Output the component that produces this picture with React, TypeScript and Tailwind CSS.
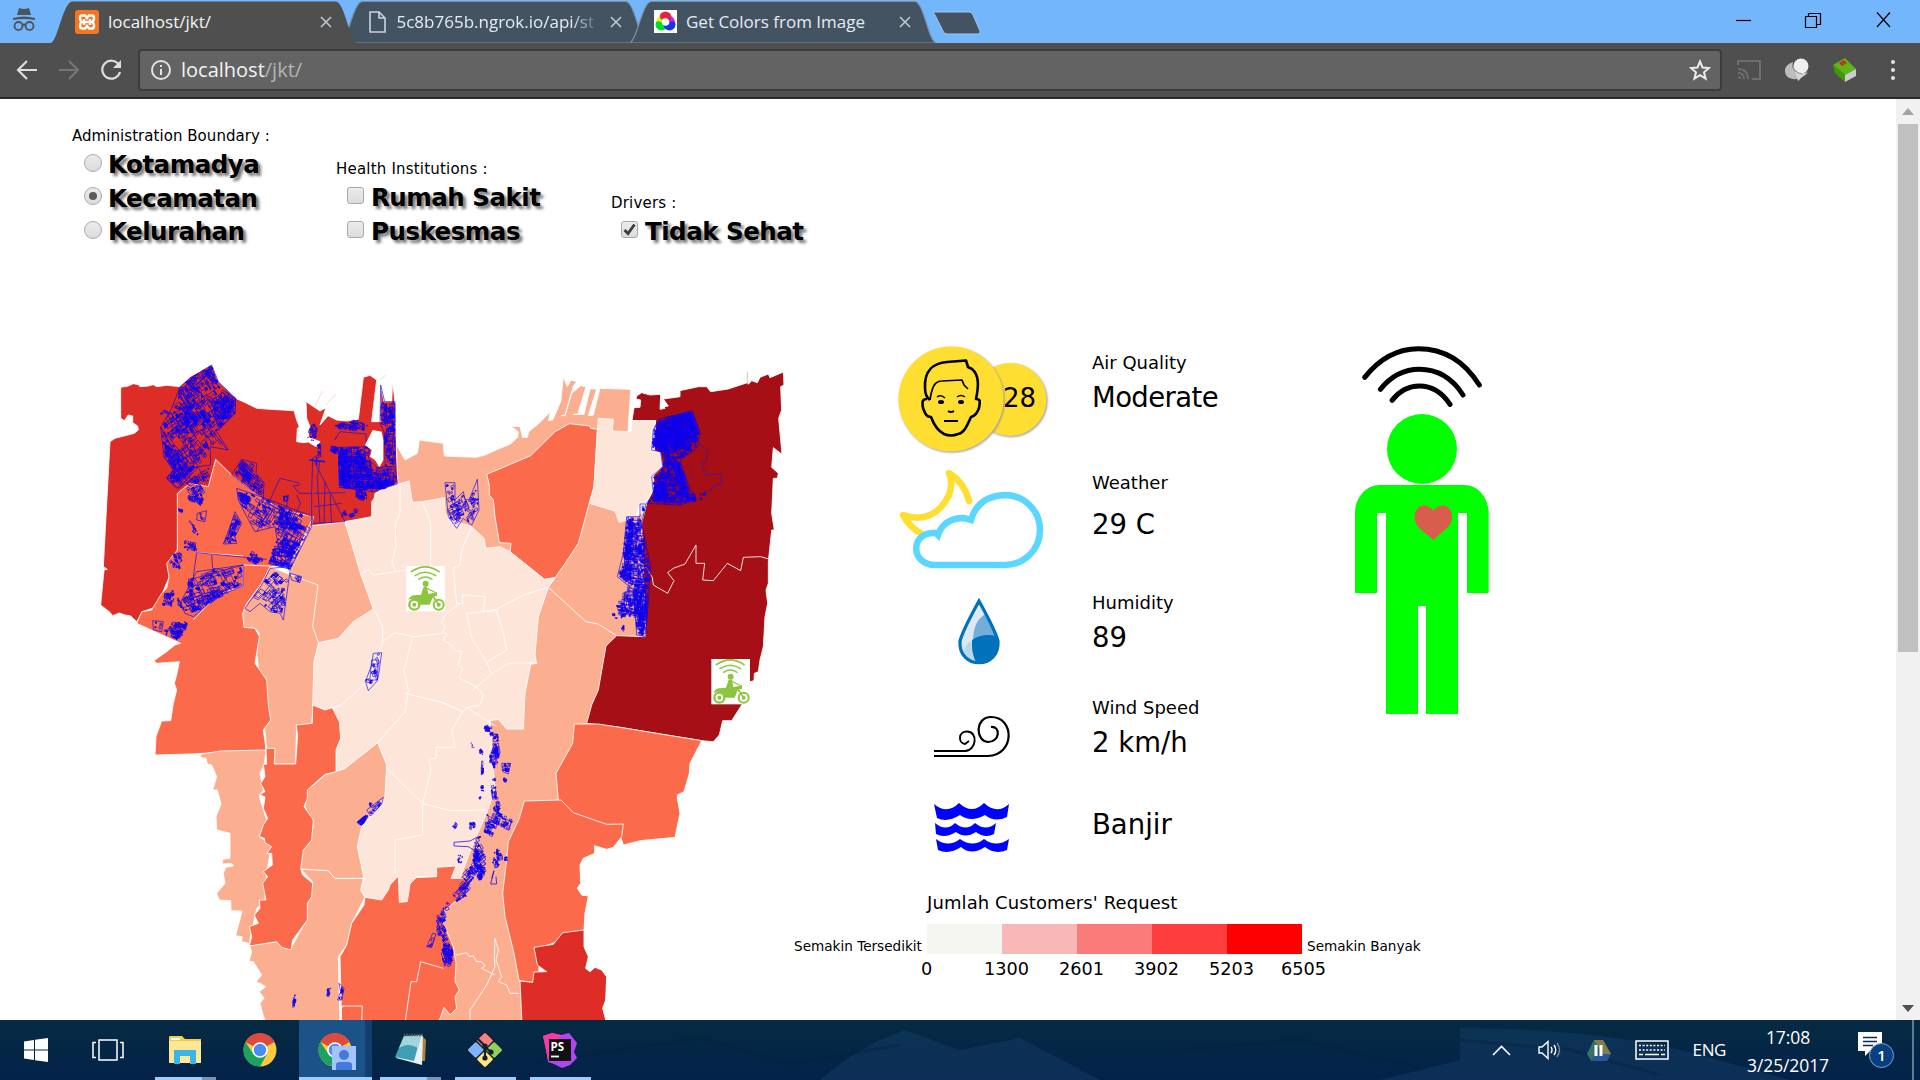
import React from "react";

type Pt = [number, number];

const parse = (s: string): Pt[] => s.split(" ").map((p) => p.split(",").map(Number) as Pt);

function inside(x: number, y: number, poly: Pt[]) {
  let r = false;
  for (let i = 0, j = poly.length - 1; i < poly.length; j = i++) {
    const [xi, yi] = poly[i];
    const [xj, yj] = poly[j];
    if (yi > y !== yj > y && x < ((xj - xi) * (y - yi)) / (yj - yi) + xi) r = !r;
  }
  return r;
}

// Building footprints scattered inside an outline, aligned to the street angle.
function footprints(poly: Pt[], n: number, deg: number, size: number, seed: number) {
  let s = seed * 7919 + 13;
  const rnd = () => {
    s = (s * 1103515245 + 12345) % 2147483648;
    return s / 2147483648;
  };
  const xs = poly.map((p) => p[0]);
  const ys = poly.map((p) => p[1]);
  const x0 = Math.min(...xs), x1 = Math.max(...xs), y0 = Math.min(...ys), y1 = Math.max(...ys);
  const a = (deg * Math.PI) / 180;
  const ca = Math.cos(a), sa = Math.sin(a);
  let line = "";
  let solid = "";
  let made = 0;
  for (let t = 0; t < n * 12 && made < n; t++) {
    const cx = x0 + rnd() * (x1 - x0);
    const cy = y0 + rnd() * (y1 - y0);
    const filled = rnd() < 0.28;
    const big = rnd() < 0.12 ? 2 : 1;
    const k = filled ? 0.45 : big;
    const w = k * size * (0.2 + rnd() * rnd() * 1.4);
    const h = k * size * (0.2 + rnd() * rnd());
    const pts = ([[-w, -h], [w * 0.9, -h], [w, h], [-w * 0.8, h * 0.9]] as Pt[]).map(
      ([u, v]) => [cx + u * ca - v * sa, cy + u * sa + v * ca] as Pt
    );
    if (!pts.every((p) => inside(p[0], p[1], poly))) continue;
    made++;
    const d = "M" + pts.map((p) => p[0].toFixed(1) + " " + p[1].toFixed(1)).join("L") + "Z";
    if (filled) solid += d;
    else line += d;
  }
  return { line, solid };
}

interface Cluster { p: string; n: number; a: number; s: number; o?: boolean }

function Flood({ items }: { items: Cluster[] }) {
  return (
    <>
      {items.map((c, i) => {
        const f = footprints(parse(c.p), c.n, c.a, c.s, i + 3);
        return (
          <g key={i} stroke="#1000ec" strokeWidth="1.9" fill="none">
            {c.o && <polygon points={c.p} />}
            <path d={f.line} />
            <path d={f.solid} fill="#0a00f0" />
          </g>
        );
      })}
    </>
  );
}

const northWest: Cluster[] = [
  { p: "365,45 385,95 437,145 435,190 380,245 415,300 360,290 362,345 325,350 290,390 260,415 230,385 250,360 222,320 245,290 212,232 245,175 270,110 300,85", n: 300, a: 55, s: 15, o: true },
  { p: "365,45 385,95 400,115 375,100 340,75 290,110 260,150 245,190 205,195 208,180 245,175 270,110 300,85", n: 90, a: -30, s: 9 },
  { p: "437,145 435,190 385,240 370,170 400,120", n: 100, a: 45, s: 11, o: true },
  { p: "212,232 290,330 300,390 265,415 230,385 250,360 222,320", n: 100, a: 55, s: 13, o: true },
  { p: "300,110 320,150 330,230 290,240 265,170", n: 60, a: 55, s: 12 },
  { p: "290,390 362,345 358,410 325,390 350,430 335,468 270,420", n: 50, a: -30, s: 12 },
  { p: "318,440 340,450 335,468 290,450 295,435", n: 28, a: 30, s: 7 },
  { p: "322,490 350,482 345,515 320,510", n: 5, a: 20, s: 7, o: true },
  { p: "265,475 285,480 275,490 265,488", n: 8, a: 20, s: 6 },
  { p: "295,510 310,515 330,560 310,555", n: 10, a: 50, s: 8 },
  { p: "280,570 322,578 320,605 282,602", n: 22, a: 25, s: 9 },
  { p: "425,375 455,328 500,340 498,370 522,398 520,445 470,410", n: 75, a: 40, s: 13, o: true },
  { p: "440,415 540,450 668,500 665,530 600,658 535,640 565,590 555,530 495,545 470,500 445,450", n: 150, a: 30, s: 15, o: true },
  { p: "440,420 480,440 490,480 445,450", n: 40, a: 30, s: 9 },
  { p: "540,470 620,500 655,540 560,545", n: 50, a: 20, s: 12 },
  { p: "555,572 635,570 602,658 535,640", n: 100, a: 8, s: 10 },
  { p: "435,485 455,520 435,560 440,580 400,582 420,530", n: 50, a: 20, s: 9, o: true },
  { p: "232,640 255,605 275,600 280,660 262,665", n: 28, a: 60, s: 9 },
  { p: "320,665 460,645 460,708 380,740 310,800 285,790 270,760", n: 80, a: -20, s: 15, o: true },
  { p: "300,800 330,745 390,705 460,690 455,712 385,745", n: 80, a: -38, s: 9 },
  { p: "215,765 222,730 255,715 250,775", n: 32, a: 10, s: 9 },
  { p: "188,812 220,815 215,845 190,840", n: 5, a: 20, s: 8, o: true },
  { p: "240,815 300,815 290,840 265,872 215,850", n: 70, a: 20, s: 9 },
  { p: "262,735 275,755 285,780 262,770", n: 16, a: 60, s: 7 },
  { p: "290,690 315,680 318,740 300,740", n: 26, a: 80, s: 8 },
  { p: "465,635 485,600 530,632 500,645", n: 30, a: 20, s: 10 },
  { p: "540,655 602,650 595,700 580,810 570,790 540,785 510,760 480,785 465,775 515,705", n: 34, a: -50, s: 18, o: true },
  { p: "600,670 635,680 630,698 605,690", n: 6, a: 20, s: 8, o: true },
  { p: "540,720 590,700 584,790 540,790", n: 38, a: 5, s: 8 },
  { p: "655,235 672,210 685,240 680,275 652,270", n: 24, a: 60, s: 8 },
  { p: "680,275 692,280 694,320 684,330", n: 14, a: 90, s: 7 },
  { p: "732,222 800,208 838,228 830,245 738,240", n: 40, a: 10, s: 11 },
  { p: "720,288 745,290 745,312 720,308", n: 16, a: 10, s: 9 },
  { p: "745,292 840,290 835,325 862,355 880,350 915,350 922,402 850,425 748,412", n: 230, a: 2, s: 14, o: true },
  { p: "744,300 772,300 770,412 748,412", n: 70, a: 90, s: 12 },
  { p: "770,320 830,320 830,360 770,360", n: 60, a: 0, s: 8 },
  { p: "850,400 922,378 922,402 890,420 750,415 750,400", n: 80, a: -6, s: 10 },
  { p: "872,105 884,155 915,155 916,350 886,350 882,245 870,220", n: 80, a: 88, s: 14, o: true },
  { p: "755,465 770,470 772,500 755,500", n: 8, a: 10, s: 6 },
  { p: "775,495 800,470 810,480 785,510", n: 12, a: -30, s: 7 },
  { p: "795,415 832,415 830,462 798,450", n: 30, a: 0, s: 9 },
  { p: "850,910 875,908 865,980 862,990 828,990 845,945", n: 6, a: 70, s: 9, o: true },
];

const northEast: Cluster[] = [
  { p: "15,398 45,398 45,450 70,425 75,450 88,448 112,388 117,480 95,525 70,505 50,535 25,500", n: 80, a: 65, s: 11, o: true },
  { p: "640,240 655,208 757,182 780,250 770,295 720,330 740,390 765,450 720,465 620,460 640,430 635,380 668,350 662,305 635,300", n: 620, a: -12, s: 10, o: true },
  { p: "640,240 655,208 757,182 780,250 720,300 680,280 690,330 662,305 635,300", n: 300, a: -12, s: 12 },
  { p: "690,330 715,330 740,390 760,452 735,455 715,400", n: 100, a: 60, s: 9 },
  { p: "640,400 690,360 680,400 690,450 640,455", n: 120, a: 20, s: 9 },
  { p: "600,462 618,462 605,520 632,650 628,710 617,860 590,855 580,720 532,680 550,610 560,500 600,500", n: 300, a: 2, s: 14, o: true },
  { p: "585,700 628,700 617,860 600,858 580,800 515,815 515,790 558,710", n: 110, a: 5, s: 13 },
  { p: "560,500 580,500 575,700 532,680 560,640 548,610", n: 110, a: 80, s: 10 },
  { p: "725,430 800,422 800,445 725,465", n: 14, a: -10, s: 13 },
  { p: "545,822 558,825 550,848 543,842", n: 8, a: 60, s: 7 },
];

const south: Cluster[] = [
  { p: "755,0 775,0 772,62 745,92 735,60 750,55", n: 9, a: 100, s: 12, o: true },
  { p: "708,488 735,465 750,468 725,498", n: 40, a: -50, s: 8 },
  { p: "740,450 790,412 785,432 752,468", n: 12, a: -50, s: 10, o: true },
  { p: "745,425 758,430 750,445", n: 8, a: 30, s: 6 },
  { p: "520,1005 530,1003 528,1045 517,1045", n: 12, a: 95, s: 8 },
  { p: "622,985 633,982 628,1018 617,1015", n: 12, a: 105, s: 8 },
  { p: "657,970 672,985 665,1020 653,1020 662,995", n: 8, a: 95, s: 9, o: true },
  { p: "1085,205 1105,187 1125,205 1138,230 1142,290 1125,330 1130,400 1147,440 1140,470 1115,450 1118,420 1105,400 1120,340 1105,300 1120,240", n: 85, a: 80, s: 13 },
  { p: "1145,310 1172,310 1165,342 1148,335", n: 14, a: 5, s: 10, o: true },
  { p: "1145,355 1162,350 1160,372 1150,365", n: 8, a: 5, s: 7 },
  { p: "1050,240 1058,255 1070,265 1055,265", n: 8, a: 50, s: 5 },
  { p: "1075,268 1092,265 1088,290 1078,285", n: 10, a: 50, s: 7 },
  { p: "1083,300 1092,300 1090,360 1083,360", n: 10, a: 90, s: 8 },
  { p: "1080,375 1093,375 1092,395 1082,392", n: 7, a: 90, s: 7 },
  { p: "1077,405 1084,405 1083,420 1077,420", n: 4, a: 90, s: 5 },
  { p: "1090,520 1100,460 1140,455 1180,480 1170,520 1140,500 1110,540", n: 48, a: 20, s: 13 },
  { p: "1050,640 1062,540 1080,520 1090,555 1100,600 1100,630 1085,670", n: 80, a: 60, s: 12 },
  { p: "1115,620 1120,570 1140,560 1150,600 1130,630", n: 24, a: 80, s: 9 },
  { p: "1152,590 1163,590 1162,608 1153,605", n: 8, a: 80, s: 6 },
  { p: "993,490 1015,482 1015,508 1000,508", n: 8, a: 50, s: 7 },
  { p: "1040,490 1068,482 1065,508 1042,512", n: 14, a: 20, s: 8 },
  { p: "1010,585 1030,580 1028,612 1010,610", n: 8, a: 30, s: 9 },
  { p: "1030,630 1065,610 1070,650 1040,710 990,742 968,740 1010,690", n: 52, a: -45, s: 12 },
  { p: "965,738 990,740 975,790 985,840 1000,870 1000,910 975,930 962,880 970,850 950,820 948,770", n: 95, a: 65, s: 12 },
  { p: "938,820 948,822 935,862 920,860", n: 5, a: 105, s: 9, o: true },
];

const RED = "#de2d26", ORG = "#fb6a4a", SAL = "#fcae91", PALE = "#fee5d9", DARK = "#a50f15";

function Rider({ x, y }: { x: number; y: number }) {
  return (
    <g transform={`translate(${x} ${y})`}>
      <rect width="116" height="136" fill="#fff" />
      <g fill="none" stroke="#8cc63f" strokeLinecap="round">
        <path d="M15 17Q57 -12 98 17" strokeWidth="5" />
        <path d="M26 29Q57 8 88 29" strokeWidth="4.5" />
        <path d="M37 40Q57 26 77 40" strokeWidth="4" />
        <circle cx="24" cy="116" r="15" strokeWidth="7" />
        <circle cx="97" cy="116" r="15" strokeWidth="6" />
        <path d="M78 88L97 116" strokeWidth="5" />
        <path d="M60 66L84 78" strokeWidth="4" />
      </g>
      <g fill="#8cc63f">
        <circle cx="58" cy="53" r="9" />
        <path d="M52 62L62 62L66 84L78 82L92 78L92 90L80 92L70 116L42 116L38 104Q24 94 6 102Q12 88 24 88L44 86Z" />
        <circle cx="24" cy="116" r="6" /><circle cx="97" cy="116" r="6" />
      </g>
    </g>
  );
}

function DistrictMap() {
  return (
    <svg className="block h-[670px] w-[700px] shrink-0" viewBox="0 0 2100 2010">
      <g stroke="#fff" strokeWidth="2.6" strokeLinejoin="round">
        {/* coastal strip and centre-east */}
        <g fill={SAL}>
          <polygon points="920,285 945,330 982,310 988,270 1060,280 1063,318 1160,322 1185,315 1230,295 1260,283 1283,262 1285,245 1262,228 1290,230 1298,263 1312,262 1316,245 1345,222 1382,185 1375,212 1388,210 1412,155 1420,80 1432,110 1443,90 1460,95 1450,108 1425,195 1414,197 1425,197 1445,130 1472,107 1488,110 1463,193 1450,193 1482,193 1500,117 1520,117 1495,197 1510,195 1530,115 1622,118 1614,245 1640,330 1640,500 1700,460 1670,870 1600,900 1560,1120 1460,1400 1400,1700 1295,2020 760,2020 900,1500 1030,1000 1000,800 1130,600 960,500 920,400" />
          <polygon points="765,515 665,527 640,565 602,640 600,800 685,880 755,870 850,777" />
          <polygon points="540,650 630,685 684,705 668,830 686,880 673,930 671,1065 665,1120 620,1130 616,1242 555,1242 530,1195 510,990 500,910 508,850 495,835 460,832 458,780 530,665" />
        </g>
        {/* west */}
        <polygon fill={RED} points="92,112 115,108 130,101 145,104 150,110 175,108 190,104 200,110 230,106 270,110 300,80 365,45 385,95 437,145 470,160 500,175 540,178 612,182 620,210 628,230 622,235 620,275 640,278 655,276 678,290 690,275 655,262 660,230 650,205 648,155 690,183 708,173 690,225 714,197 740,210 770,213 805,208 820,82 840,76 860,90 845,215 872,215 872,105 882,155 905,155 908,92 915,160 916,240 924,400 855,430 845,500 765,515 665,527 560,520 378,420 270,500 262,600 238,680 200,770 158,785 140,815 122,798 105,795 88,789 68,797 60,787 32,765 42,660 52,658 40,650 48,500 60,275 75,265 133,250 145,240 143,228 128,218 128,198 115,195 103,212 92,205" />
        <polygon fill={ORG} points="377,328 425,375 530,455 600,485 670,500 665,527 640,565 602,645 540,650 515,700 470,760 458,790 462,832 495,835 508,860 500,910 495,940 530,990 535,1065 542,1110 520,1140 530,1210 440,1205 300,1212 195,1215 198,1160 215,1113 242,1112 250,1060 260,1020 253,1000 260,975 268,935 200,940 192,932 230,905 255,885 272,880 140,820 155,785 185,780 215,730 230,715 237,680 230,640 262,600 262,430 300,400 355,410" />
        <path fill="none" d="M320 608L460 618M310 810L380 735L460 708V645L540 648M670 500L600 645" />
        {/* eastern districts */}
        <g transform="translate(1050 0)">
          <polygon fill={ORG} points="140,373 272,317 345,245 388,221 450,228 452,235 472,238 462,410 445,470 415,580 372,645 345,683 313,688 210,605 213,580 178,578 165,500 160,450 148,435 148,405" />
          <polygon fill={DARK} points="576,212 582,173 600,172 602,150 588,147 590,138 605,128 630,135 662,133 660,178 675,175 672,170 685,168 670,147 720,140 720,122 775,110 800,110 812,125 865,117 922,98 925,103 935,92 952,98 960,82 985,72 990,83 1030,66 1032,105 1022,110 1025,180 1016,205 1026,313 1000,293 995,352 1015,370 1012,385 1000,385 995,490 1003,540 995,540 985,635 985,700 978,720 983,760 975,800 970,890 960,930 955,965 943,970 942,992 930,995 905,1065 875,1112 848,1112 838,1155 820,1175 785,1172 660,1152 540,1132 440,1120 455,1065 475,1020 498,888 530,857 617,860 605,520 620,460 640,420 647,212" />
          <polygon fill={PALE} points="475,205 520,208 517,243 572,245 576,212 647,212 640,260 635,300 662,308 668,350 637,380 640,415 620,460 600,465 590,495 560,510 538,517 525,483 448,460 462,410" />
          <path fill="none" d="M617 650L637 682L640 705L683 730L702 692L683 668L700 655L735 642L768 585V640H794L788 690L820 692L862 640L902 662L910 622L962 620L987 627M325 712L438 815L475 822L530 857" />
          <path fill="none" stroke="#c4777a" strokeWidth="1.5" d="M922 65V100" />
          <polygon fill={ORG} points="403,1122 475,1122 540,1132 785,1172 750,1240 748,1270 732,1325 712,1335 720,1390 705,1462 600,1472 550,1485 535,1440 360,1450 355,1350 348,1270 370,1230 398,1180" />
        </g>
        {/* centre */}
        <path fill={PALE} d="M765 515L845 505V455L870 420L925 402L957 393L967 457L998 455L1063 443L1065 490L1100 515L1145 530L1182 565L1187 595L1230 590L1260 605L1363 688L1395 683L1375 712L1345 800L1335 915L1340 940L1322 943L1305 1030L1300 1137H1250L1225 1108L1200 1112L1215 1320L1190 1390L1150 1480L1110 1585L1083 1585L1098 1548L1040 1552V1580H978L955 1655L928 1657L925 1578L875 1650L825 1642L812 1620L822 1585L802 1490L815 1430L885 1340L890 1245L863 1178L763 1257L740 1263L738 1200L752 1165L727 1073L705 1080L668 1065L672 935L686 878L745 865L790 815L850 777L812 672Z" />
        <path fill="none" d="M930 400V490L915 520L918 590L905 640L917 662M998 457L1022 520V648M812 672L835 658L850 675L950 660M850 777L878 830V875L915 848L970 860L1060 850M968 860L942 960L955 1020L945 1085L863 1178M877 875L870 910L830 995L755 1065L727 1073M945 1030L1060 1058L1118 1085L1085 1140L1095 1192H1040L1038 1225L1018 1227L1022 1265L998 1360M863 1178L895 1260L998 1360L1080 1382L1190 1380M998 1360V1455L915 1470V1570M1050 1055L1118 1085L1130 1073L1220 1130M1145 530L1115 600L1110 645L1090 655L1100 760L1118 760V735L1185 740L1180 785M1065 795L1110 760M1180 785L1220 778L1300 735L1375 712L1395 683M1130 790L1220 782L1240 850L1250 900L1190 937L1145 865ZM1190 937L1205 972L1148 1020M1205 972L1255 940L1340 938M1065 795L1055 815L1065 830L1058 845L1070 850L1060 872L1085 885L1092 900L1115 905L1105 945L1118 955L1108 985L1140 1000L1160 1012L1180 1035L1170 1065L1130 1073" />
        {/* south */}
        <g transform="translate(90 930)">
          <polygon fill={SAL} points="242,283 300,273 438,270 433,313 420,340 430,390 418,410 440,480 418,530 455,555 440,635 435,720 410,745 388,850 365,845 367,830 347,827 366,753 333,752 332,722 298,720 290,700 315,670 310,640 318,622 340,618 335,610 307,612 308,598 330,595 330,520 290,510 288,470 303,432 292,390 278,390 290,350 275,315 262,312 258,295 242,293" />
          <polygon fill={SAL} points="388,855 440,850 470,845 510,870 560,780 562,740 578,665 542,627 625,632 645,655 730,655 722,690 735,712 695,790 680,855 655,890 660,1090 437,1090 428,1060 420,1030 432,1015 418,995 437,980 420,970 408,965 425,945 400,905 387,905 395,875" />
          <polygon fill={SAL} points="562,390 615,345 650,333 673,327 773,248 800,315 795,410 725,500 712,560 732,655 645,655 625,632 542,627 545,575 580,500 555,440" />
          <polygon fill={ORG} points="438,265 465,265 463,312 527,312 533,225 528,195 577,190 578,135 615,150 637,143 658,185 662,235 648,270 648,335 615,343 562,390 562,415 552,440 580,480 575,540 550,570 542,627 548,645 578,670 575,710 562,730 562,780 518,840 513,870 485,862 470,845 388,858 395,830 388,800 415,790 403,765 420,745 418,720 438,720 428,670 443,650 430,635 457,615 455,580 440,580 455,560 435,548 433,535 418,530 430,495 443,475 430,445 435,410 418,405 435,395 422,370 435,350 430,313 440,313" />
          <polygon fill={ORG} points="735,712 785,720 805,690 810,675 835,648 838,727 862,725 870,672 888,653 950,650 950,622 1008,618 993,655 1060,655 1035,700 975,750 970,790 1000,860 1008,910 1005,965 1018,990 1005,1010 1010,1045 990,1065 972,1042 955,1090 665,1090 660,890 680,855 695,790 732,735" />
          <path fill="none" d="M665 1045L668 1038L727 1038L725 1090M970 925L902 905L890 965H873L855 1090M1008 885L1040 878L1048 890L1060 888L1070 905L1085 905L1095 918L1085 925L1125 945M1123 895L1125 835L1135 870L1128 900L1145 950L1135 965L1160 975L1170 1000H1198M1123 895L1125 920L1100 975L1050 1050V1090" />
        </g>
        <g transform="translate(1050 930)">
          <polygon fill={ORG} points="253,423 363,420 400,458 500,493 550,492 545,530 520,562 500,568 463,557 465,580 430,595 420,615 422,670 412,685 425,705 445,708 435,760 432,812 300,865 295,960 278,967 237,962 222,880 195,770 188,700 200,600 205,545 238,475" />
          <polygon fill={RED} points="432,810 368,818 340,853 282,862 292,915 320,935 282,936 278,967 240,963 246,1090 500,1090 488,1045 497,1020 500,950 485,930 465,922 450,935 437,925 445,890 432,860" />
        </g>
        {/* land beyond the south-east border */}
        <path fill="#fff" stroke="none" d="M1602 1487L1594 1465L1590 1490L1570 1492L1550 1500L1513 1487V1510L1480 1525L1470 1545L1472 1600L1462 1615L1475 1635L1495 1638L1485 1690L1482 1740L1482 1790L1495 1820L1487 1855L1500 1865L1515 1852L1535 1860L1550 1880L1547 1950L1538 1975L1550 2015H2100V1176H1836L1800 1240L1798 1270L1782 1325L1762 1335L1760 1345L1770 1390L1755 1462L1650 1472Z" />
        <path fill="none" stroke="#f4b0ac" strokeWidth="1.5" d="M675 170L697 123M708 165L738 132M870 90L888 75" />
      </g>
      <Flood items={northWest} />
      <g transform="translate(1050 0)">
        <Flood items={northEast} />
        <path fill="none" stroke="#3312c0" strokeWidth="2" d="M775 278L802 300L798 335L785 340L797 375L845 372L843 405H820L815 420L800 422M730 348H735M755 345V352M750 378L757 380M735 400H742" />
      </g>
      <g transform="translate(90 930)">
        <Flood items={south} />
        <path fill="none" stroke="#1000ec" strokeWidth="2.2" d="M1070 575L1045 560L1002 558V547L1050 543L1075 530M1115 655L1122 632M1128 650L1130 672L1112 672L1122 632" />
      </g>
      <g fill="none" stroke="#2a10c8" strokeWidth="2.2">
        <path d="M540 450L570 385L625 398L628 405L610 408L628 430L665 430L668 325M690 310L668 325L765 515M690 330L682 385L690 520M705 395L702 520M720 435L725 520M670 430L765 428M672 470L755 460M670 520L765 515M620 435L632 460L615 495M560 475L590 470L595 435L580 445L590 455M665 430V525M320 608L530 628M320 608L310 680M365 615L368 655L400 660M295 690L460 645M500 545L525 500M455 330L445 360M738 265L750 245L828 252V275M735 270L738 260M345 255L355 300M280 130L410 298M300 90L330 150M245 200L350 400" />
        <path d="M658 330L705 335M680 320V345M582 440H592V452H582Z" strokeWidth="5" />
      </g>
      <path fill="#fff" d="M848 240L875 245L880 270V330L868 352L855 330L840 320L845 300L825 285Z" />
      <Rider x={949} y={648} />
      <Rider x={1864} y={927} />
    </svg>
  );
}

interface TabProps { children: React.ReactNode; title: string; active?: boolean; faded?: boolean }

function Tab({ children, title, active, faded }: TabProps) {
  return (
    <div className={`relative -mr-[16.500px] flex h-[43px] w-[306px] items-center ${active ? "z-10" : ""}`}>
      <svg className="absolute inset-0 h-full w-full" viewBox="0 0 307 43" preserveAspectRatio="none">
        <path d="M0 43C7 40 12 3 21 1.5H286C295 3 299 40 307 43Z" fill={active ? "#4f4f4f" : "#445362"} stroke={active ? "#8d9aa6" : "#7e92a4"} strokeWidth={active ? 0 : 1.2} />
      </svg>
      <div className="relative flex w-full items-center pr-[25px] pl-[24px]">
        {children}
        <span className={`ml-[9px] flex-1 overflow-hidden text-[17px] whitespace-nowrap ${active ? "text-[#f4f4f4]" : "text-[#e4ecf5]"} ${faded ? "[mask-image:linear-gradient(to_right,#000_85%,transparent)]" : ""}`}>{title}</span>
        <svg className="ml-[9px] h-[12px] w-[12px]" viewBox="0 0 12 12" stroke="#c3cbd2" strokeWidth="1.5"><path d="M1 1L11 11M11 1L1 11" /></svg>
      </div>
    </div>
  );
}

function TitleBar() {
  return (
    <header className="flex h-[43px] bg-[#74b6fb]">
      <div className="w-[51px] pt-[7px] pl-[12px]">
        <svg width="24" height="25" viewBox="0 0 24 25" fill="#4a5560">
          <path d="M7 1Q12 3 17 1L19 8H5ZM1 11Q12 8 23 11V13Q12 11 1 13Z" />
          <g fill="none" stroke="#4a5560" strokeWidth="1.8"><circle cx="6.5" cy="19" r="4" /><circle cx="17.5" cy="19" r="4" /><path d="M10.5 18Q12 17 13.5 18" /></g>
        </svg>
      </div>
      <Tab title="localhost/jkt/" active>
        <svg width="24" height="24" viewBox="0 0 24 24">
          <rect width="24" height="24" rx="3" fill="#f37623" />
          <path d="M7 5.5H10L12 8L14 5.5H17Q19 5.500 19 8Q19 11 17 12Q19 13 19 16Q19 18.500 17 18.500H14L12 16L10 18.500H7Q5 18.500 5 16Q5 13 7 12Q5 11 5 8Q5 5.500 7 5.500ZM9 9V15M15 9V15M9 12H15" fill="none" stroke="#fff" strokeWidth="2.4" />
        </svg>
      </Tab>
      <Tab title="5c8b765b.ngrok.io/api/st" faded>
        <svg className="mr-[2px] ml-1" width="17" height="22" viewBox="0 0 17 22" fill="none" stroke="#c9d4de" strokeWidth="1.6"><path d="M1 1H10L16 7V21H1ZM10 1V7H16" /></svg>
      </Tab>
      <Tab title="Get Colors from Image">
        <svg width="23" height="23" viewBox="0 0 23 23">
          <rect width="23" height="23" fill="#fff" />
          <circle cx="11.500" cy="7.500" r="6" fill="#e8243a" />
          <circle cx="7.500" cy="14.500" r="6" fill="#00dd2a" /><circle cx="15.500" cy="14.500" r="6" fill="#1733f0" />
          <path d="M2.500 12Q2 8 6 6Q6 10 9 11L8 12.500Q5 10.500 2.500 12Z" fill="#f8ec1e" /><path d="M20.500 12Q21 8 17 6Q17 10 14 11L15 12.500Q18 10.500 20.500 12Z" fill="#e619d9" />
          <circle cx="11.500" cy="12" r="3.800" fill="#fff" />
        </svg>
      </Tab>
      <svg className="mt-[11px] ml-[12px]" width="52" height="24" viewBox="0 0 52 24"><path d="M1 1H37Q40 1 41 4L48 20Q49 23 46 23H15Q12 23 11 20L3 4Z" fill="#445362" stroke="#9cc6ee" /></svg>
      <svg className="mt-[12px] mr-[29px] ml-auto" width="155" height="16" viewBox="0 0 155 16" fill="none" stroke="#000" strokeWidth="1.2">
        <path d="M0 8.500H15" /><path d="M69.500 4.500H80.500V15.500H69.500ZM72.500 4.500V1.500H84.500V12.500H80.500" /><path d="M141 .5L154 15M154 .5L141 15" />
      </svg>
    </header>
  );
}

function Toolbar() {
  return (
    <div className="flex h-[56px] items-center border-b-2 border-[#2b2b2b] bg-[#4f4f4f]">
      <svg className="ml-[16px]" width="108" height="24" viewBox="0 0 108 24" fill="none" strokeWidth="2.2">
        <path d="M21 12H2M11 3L2 12L11 21" stroke="#dedede" />
        <path d="M43 12H62M53 3L62 12L53 21" stroke="#757575" />
        <path d="M103 7A9 9 0 1 0 104 14" stroke="#dedede" /><path d="M105 2V10H97Z" fill="#dedede" />
      </svg>
      <div className="ml-[14px] flex h-[42px] w-[1584px] items-center rounded-[4px] border-2 border-[#3d3d3d] bg-[#636363] pr-[9px] pl-[10px]">
        <svg width="22" height="22" viewBox="0 0 22 22" fill="none" stroke="#e2e2e2" strokeWidth="2"><circle cx="11" cy="11" r="9" /><path d="M11 10V16M11 6V8" /></svg>
        <span className="ml-[9px] text-[20px] text-[#f4f4f4]">localhost<span className="text-[#b4b4b4]">/jkt/</span></span>
        <svg className="ml-auto" width="22" height="22" viewBox="0 0 22 22" fill="none" stroke="#ececec" strokeWidth="2"><path d="M11 2.500L13.500 8.500L20 9L15 13.300L16.600 19.700L11 16.200L5.400 19.700L7 13.300L2 9L8.500 8.500Z" /></svg>
      </div>
      <svg className="ml-[15px]" width="24" height="20" viewBox="0 0 24 20" fill="none" stroke="#6d6d6d" strokeWidth="2"><path d="M1 5V1H23V19H15M1 17Q3 17 3 19M1 13Q7 13 7 19M1 9Q11 9 11 19" /></svg>
      <svg className="ml-[23px]" width="26" height="26" viewBox="0 0 26 26"><path d="M9 5Q0 8 1 15Q2 21 9 22Q16 23 24 16Q18 18 12 15Q7 12 9 5Z" fill="#bdbdbd" /><circle cx="17" cy="9" r="7.500" fill="#efefef" /><path d="M9 7Q8 15 15 16Q20 17 24 14L14 24Z" fill="#d6d6d6" /><path d="M9 8Q9 15 18 17" stroke="#8a8a8a" fill="none" /></svg>
      <svg className="ml-[23px]" width="24" height="26" viewBox="0 0 24 26"><path d="M0 8L12 1L23 12L12 18Z" fill="#5fb513" /><path d="M0 8L12 18V25L2 16Z" fill="#3f9a09" /><path d="M12 18L23 12V19L12 25Z" fill="#ccc" /><path d="M6 6L11 3L14 6L9 9Z" fill="#c4341b" /></svg>
      <div className="ml-[34px] flex flex-col gap-[4px]">
        <i className="h-[4px] w-[4px] rounded-full bg-[#e4e4e4]" /><i className="h-[4px] w-[4px] rounded-full bg-[#e4e4e4]" /><i className="h-[4px] w-[4px] rounded-full bg-[#e4e4e4]" />
      </div>
    </div>
  );
}

function Choice({ label, round, on }: { label: string; round?: boolean; on?: boolean }) {
  return (
    <div className="flex h-[33.500px] items-center">
      <span className={`flex items-center justify-center border border-[#a9a9a9] bg-gradient-to-b from-[#ececec] to-[#dcdcdc] ${round ? "h-[18px] w-[18px] rounded-full" : "h-[17px] w-[17px] rounded-[3px]"} -mt-1`}>
        {on && round && <span className="h-[8px] w-[8px] rounded-full bg-[#5b5b5b]" />}
        {on && !round && <svg width="13" height="13" viewBox="0 0 13 13" fill="none" stroke="#3c3c3c" strokeWidth="2.800"><path d="M1.500 7L5 10.500L11.500 1.500" /></svg>}
      </span>
      <span className={`${round ? "ml-[6px]" : "ml-[7px]"} pt-[2px] text-[24.500px] font-bold tracking-[-0.500px] text-black [text-shadow:3px_3px_3px_#777]`}>{label}</span>
    </div>
  );
}

function Reading({ label, value, h, gap, tight, children }: { label?: string; value: string; h: string; gap: string; tight?: boolean; children: React.ReactNode }) {
  return (
    <div className={`flex ${h}`}>
      <div className="w-[202px] shrink-0">{children}</div>
      <div className={`flex flex-col ${gap}`}>
        {label && <span className="text-[18px] leading-[22px]">{label}</span>}
        <span className={`text-[27.500px] leading-[34px] ${tight ? "tracking-[-0.600px]" : ""}`}>{value}</span>
      </div>
    </div>
  );
}

function Readings() {
  return (
    <div className="ml-[100px] w-[400px] shrink-0">
      <Reading label="Air Quality" value="Moderate" h="h-[120px]" gap="gap-[6px] pt-[2px]" tight>
        <svg className="-mt-[12px] ml-[2px] overflow-visible" width="164" height="120" viewBox="-6 -10 164 120">
          <g className="[filter:drop-shadow(1px_1.500px_1px_#999)]"><ellipse cx="112" cy="51.500" rx="36.500" ry="36.500" fill="#ffde32" /></g>
          <g className="[filter:drop-shadow(1px_1.500px_1px_#999)]"><circle cx="53" cy="51" r="52.500" fill="#ffde32" /></g>
          <g fill="none" stroke="#000" strokeWidth="2.600" strokeLinejoin="round">
            <path d="M32 52C28 49 27 44 27 40C26 22 36 15 49 14L68 12.500L70 19L74 21C81 27 81 37 78 51C83 51 82 54 81 60C79 66 77 68 73 69C69 78 66 85 60 86Q53 89 46 86C40 83 36 77 33 69C28 69 27 65 25 60C24 54 24 51 29 51" />
            <path d="M32 52C34 38 37 33 44 33L64 32L66 37L70 41" strokeWidth="1.700" />
            <path d="M46 73H60" strokeWidth="2" /><path d="M39 49Q43 46 47 50M59 49Q63 46 67 49" strokeWidth="1.500" /><path d="M50 63Q53 65 56 63" strokeWidth="2" />
          </g>
          <ellipse cx="43" cy="54" rx="3" ry="2" /><ellipse cx="63" cy="54" rx="3" ry="2" />
          <text x="105" y="59" fontSize="26">28</text>
        </svg>
      </Reading>
      <Reading label="Weather" value="29 C" h="h-[120px]" gap="gap-[13px] pt-[2px]">
        <svg className="-mt-[5px] ml-[8px]" width="150" height="106" viewBox="0 0 150 106" fill="none" strokeWidth="6.500" strokeLinecap="round">
          <path d="M24 69Q11 62 5 50Q28 58 43 42Q58 25 51 8Q66 17 71 36" stroke="#ffde32" strokeLinejoin="round" />
          <path d="M40 70Q46 53 66 53L73 55Q80 31 107 30A35 35 0 0 1 107 100H36C12 99 12 66 38 68Z" fill="#fff" stroke="#5bd7ff" strokeLinecap="butt" />
        </svg>
      </Reading>
      <Reading label="Humidity" value="89" h="h-[105px]" gap="gap-[6px] pt-[2px]">
        <svg className="mt-[6px] ml-[67px]" width="45" height="71" viewBox="0 0 45 71">
          <path d="M22 3Q36 31 40 42C47 76-2 76 3 42Q8 29 22 3Z" fill="#dce9f4" />
          <path d="M29 18Q16 24 16 46L39 39Q36 31 29 18Z" fill="#74add9" /><path d="M15 44Q25 37 40 40Q44 68 19 67Q14 57 15 44Z" fill="#0071bb" /><path d="M7 54Q10 47 14 45Q14 58 19 66Q9 65 7 54Z" fill="#b9d7ec" />
          <path d="M22 5Q38 34 41 45C43 74 1 74 3 45Q6 34 22 5Z" fill="none" stroke="#0071bb" strokeWidth="3.200" />
        </svg>
      </Reading>
      <Reading label="Wind Speed" value="2 km/h" h="h-[105px]" gap="gap-[6px] pt-[2px]">
        <svg className="mt-[20px] ml-[44px]" width="77" height="44" viewBox="0 0 77 44" fill="none" stroke="#000">
          <path d="M0 36H31C43 35 44 16.500 33 16.500C24 16.500 24 28 31 29L35 26" strokeWidth="1.900" /><path d="M0 41H54C81 40 81 2 57 2C41 2 41 26 54 27C66 27 67 11 57 12" strokeWidth="2.200" />
        </svg>
      </Reading>
      <Reading value="Banjir" h="h-[89px]" gap="pt-[7px]">
        <svg className="mt-[3px] ml-[44px]" width="77" height="50" viewBox="0 0 77 50" fill="#00f">
          <path d="M0 1Q13 12 25 0Q38 12 50 0Q63 12 75 1L73 14Q61 20 51 12Q37 20 26 12Q13 20 3 15ZM1 20Q12 29 21 20Q32 29 41 20Q52 29 62 20L60 31Q51 36 42 29Q31 36 22 29Q11 36 2 31ZM2 36Q14 45 26 36Q39 45 50 36Q62 45 75 36L73 47Q61 52 51 44Q37 53 27 44Q15 52 4 47Z" />
        </svg>
      </Reading>
    </div>
  );
}

const ticks = [["0", "w-[63px]"], ["1300", "w-[75px]"], ["2601", "w-[75px]"], ["3902", "w-[75px]"], ["5203", "w-[72px]"], ["6505", "w-[50px]"]];

function Legend() {
  return (
    <div className="flex pl-[4px]">
      <span className="w-[133px] pt-[47px] text-[13.600px] whitespace-nowrap">Semakin Tersedikit</span>
      <div className="w-[375px] shrink-0">
        <div className="h-[35px] pt-[2px] text-[18px] leading-[24px] tracking-[0.100px] whitespace-nowrap">Jumlah Customers' Request</div>
        <div className="grid h-[30px] grid-cols-5">
          <i className="bg-[#f5f5f2]" /><i className="bg-[#f8b8b7]" /><i className="bg-[#fb7b7a]" /><i className="bg-[#fd3e3d]" /><i className="bg-[#ff0000]" />
        </div>
        <div className="-ml-[6px] flex pt-[3px] text-[17.700px] leading-[24px]">
          {ticks.map(([t, w]) => <span key={t} className={`${w} shrink-0`}>{t}</span>)}
        </div>
      </div>
      <span className="pt-[47px] pl-[5px] text-[13.600px] whitespace-nowrap">Semakin Banyak</span>
    </div>
  );
}

function Person() {
  return (
    <svg className="-mt-[20px] ml-[40px] shrink-0" width="180" height="400" viewBox="0 0 540 1200">
      <g fill="none" stroke="#000" strokeWidth="15" strokeLinecap="round">
        <path d="M104 142Q172 56 265 56Q380 56 448 165" /><path d="M151 178Q200 118 268 118Q350 118 399 195" /><path d="M186 211Q220 168 268 168Q324 168 360 223" />
      </g>
      <g fill="#0f0"><circle cx="276" cy="357" r="105" /><path d="M148 465H404C444 465 476 504 476 549V789H411V549H384V1152H288V828H264V1152H168V549H141V789H75V549C75 504 108 465 148 465Z" /></g>
      <path d="M310 543C295 517 254 520 254 562C254 590 273 598 310 630C345 598 366 588 366 562C366 519 325 518 310 543Z" fill="#d95d4d" />
    </svg>
  );
}

function ScrollBar() {
  return (
    <div className="flex w-[24px] shrink-0 flex-col items-center bg-[#f1f1f1]">
      <svg className="mt-[9px]" width="12" height="7" viewBox="0 0 12 7"><path d="M0 7L6 0L12 7Z" fill="#a3a3a3" /></svg>
      <div className="mt-[9px] h-[528px] w-[20px] bg-[#c1c1c1]" />
      <svg className="mt-auto mb-[8px]" width="12" height="7" viewBox="0 0 12 7"><path d="M0 0H12L6 7Z" fill="#505050" /></svg>
    </div>
  );
}

function ChromeLogo() {
  return (
    <svg width="34" height="34" viewBox="0 0 34 34">
      <circle cx="17" cy="17" r="16.500" fill="#fcca3f" />
      <path d="M17 17L2.500 9A16.500 16.500 0 0 1 31.500 9Z" fill="#dd4b3e" /><path d="M17 9H31.500L28 5H17Z" fill="#dd4b3e" />
      <path d="M2.500 9A16.500 16.500 0 0 0 17 33.500L24 21L11 22Z" fill="#1aa260" />
      <circle cx="17" cy="17" r="7.800" fill="#fff" /><circle cx="17" cy="17" r="6.200" fill="#4b8bf4" />
    </svg>
  );
}

function TaskButton({ children, line, active }: { children: React.ReactNode; line: "stack" | "one" | "full"; active?: boolean }) {
  return (
    <div className={`flex h-[60px] w-[73px] flex-col justify-between ${active ? "bg-gradient-to-r from-[#1b5288] from-91% to-[#123f70] to-91%" : ""}`}>
      <div className="flex h-[57px] items-center justify-center pt-[3px] pr-[13px]">{children}</div>
      {line === "stack" && <div className="flex h-[3px] w-[61px]"><i className="w-[47px] bg-[#9fcdfb]" /><i className="w-[14px] bg-[#7895b5]" /></div>}
      {line === "one" && <i className="h-[3px] w-[61px] bg-[#9fcdfb]" />}
      {line === "full" && <i className="h-[3px] w-[73px] bg-[#9fcdfb]" />}
    </div>
  );
}

function TaskBar() {
  return (
    <footer className="relative flex h-[60px] overflow-hidden bg-gradient-to-b from-[#062a42] to-[#04224a] text-white">
      <svg className="absolute inset-0" width="1920" height="60" viewBox="0 0 1920 60">
        <path d="M820 60Q860 25 905 10L960 30L1020 18L1100 60ZM1460 8Q1600 8 1700 35L1790 60H1380L1460 40Z" fill="#163f68" opacity=".45" />
        <path d="M540 42L700 18L790 44L900 25M1460 20L1570 30L1660 55M1180 30L1300 20L1420 48" stroke="#0a2038" strokeWidth="3" fill="none" opacity=".35" />
      </svg>
      <div className="relative flex">
        <div className="flex w-[72px] items-center justify-center">
          <svg width="24" height="24" viewBox="0 0 24 24" fill="#fff"><path d="M0 3.500L10 2V11.500H0ZM11 1.800L24 0V11.500H11ZM0 12.500H10V22L0 20.500ZM11 12.500H24V24L11 22.200Z" /></svg>
        </div>
        <div className="flex w-[83px] items-center pl-[20px]">
          <svg width="32" height="22" viewBox="0 0 32 22" fill="none" stroke="#fff" strokeWidth="1.500"><path d="M7 1H25V21H7ZM4 3.500H1V18.500H4M28 3.500H31V18.500H28" /></svg>
        </div>
        <TaskButton line="stack">
          <svg width="34" height="28" viewBox="0 0 34 28"><path d="M1 1Q1 0 2 0H14L17 3H33V27H1Z" fill="#f5cb48" /><path d="M1 5H33V27H1Z" fill="#ffe793" /><path d="M6 14H28V28H22V20H12V28H6Z" fill="#3bb5e8" /><path d="M3 2H12V4H3Z" fill="#fff" /></svg>
        </TaskButton>
        <div className="flex w-[71px] items-center pl-[15px]"><ChromeLogo /></div>
        <TaskButton line="full" active>
          <div className="relative ml-[12px]"><ChromeLogo />
            <svg className="absolute top-[13px] left-[14px]" width="24" height="24" viewBox="0 0 24 24"><path d="M0 0H24V24H0Z" fill="#a2c3fb" /><circle cx="12" cy="9" r="5" fill="#4678dd" /><path d="M4 24V19Q4 16 8 16H16Q20 16 20 19V24Z" fill="#4678dd" /></svg>
          </div>
        </TaskButton>
        <div className="w-[8px]" />
        <TaskButton line="stack">
          <svg width="35" height="34" viewBox="0 0 35 34"><path d="M30 4L33 7L32 28L27 28Z" fill="#b08436" /><path d="M12 3L30 2L29 32L3 25Z" fill="#e9eff2" /><path d="M11 3L28 3L21 28L2 24Z" fill="#3f9fb4" /><path d="M11 3L28 3L25 15Q15 9 6 15Z" fill="#9fd6df" /><path d="M11 2H30" stroke="#555" strokeWidth="2.500" strokeDasharray="1.500 1" /></svg>
        </TaskButton>
        <div className="w-[2px]" />
        <TaskButton line="one">
          <svg width="36" height="36" viewBox="0 0 36 36">
            <g transform="rotate(45 18 18)" stroke="#12202d" strokeWidth="1.200"><rect x="5" y="5" width="13" height="13" rx="2" fill="#f88185" /><rect x="18" y="5" width="13" height="13" rx="2" fill="#8fd161" /><rect x="5" y="18" width="13" height="13" rx="2" fill="#80b3ff" /><rect x="18" y="18" width="13" height="13" rx="2" fill="#ffe680" /></g>
            <path d="M11 7L18 14V27M18 15L24 20" stroke="#10202c" strokeWidth="2.200" fill="none" /><g fill="#10202c"><circle cx="18" cy="14" r="2.600" /><circle cx="18" cy="26" r="2.600" /><circle cx="24" cy="20" r="2.600" /></g>
          </svg>
        </TaskButton>
        <div className="w-[2px]" />
        <TaskButton line="one">
          <svg width="36" height="36" viewBox="0 0 36 36">
            <path d="M1 4L10 1L19 3L27 1L35 11L32 20L35 26L28 33L20 36L12 32L6 30L4 16Z" fill="#b345f1" /><path d="M1 4L10 1L19 3L6 28Z" fill="#f93aa0" />
            <rect x="7" y="7" width="22" height="22" fill="#111" />
            <text x="8.500" y="18.500" fontSize="11.500" fontWeight="700" fill="#fff" fontFamily="Open Sans, sans-serif">PS</text><path d="M9 24.500H17" stroke="#fff" strokeWidth="1.800" />
          </svg>
        </TaskButton>
      </div>
      <div className="relative ml-auto flex items-center">
        <svg width="19" height="11" viewBox="0 0 19 11" fill="none" stroke="#fff" strokeWidth="1.600"><path d="M1 10L9.500 1.500L18 10" /></svg>
        <svg className="ml-[27px]" width="24" height="20" viewBox="0 0 24 20" fill="none" stroke="#fff" strokeWidth="1.400"><path d="M1 7H4L10 1.500V18.500L4 13H1ZM13 7Q15 10 13 13M16 5Q19.500 10 16 15" /><path d="M19 3Q24 10 19 17" stroke="#76899f" /></svg>
        <svg className="ml-[25px]" width="24" height="21" viewBox="0 0 24 21"><path d="M7 0H16L24 14L20 21H4L0 14Z" fill="#29579a" /><path d="M7 0L0 14L4 20L12 8Z" fill="#2f7560" /><path d="M7 0H16L24 14H16Z" fill="#857f46" /><path d="M9 5V16M14 5V16" stroke="#fff" strokeWidth="3" /></svg>
        <svg className="ml-[24px]" width="34" height="20" viewBox="0 0 34 20" fill="none" stroke="#fff" strokeWidth="1.500"><path d="M1 1H33V19H1Z" /><path d="M4 5.500H30M4 10H30" strokeDasharray="2 1.600" strokeWidth="1.300" /><path d="M4 14.500H8M10 14.500H24M26 14.500H30" strokeWidth="1.300" /></svg>
        <span className="ml-[24px] text-[17px] tracking-[-0.400px]">ENG</span>
        <div className="ml-[19px] flex w-[86px] flex-col items-center pt-[2px] text-[17.500px] leading-[28px] tracking-[-0.100px]"><span>17:08</span><span>3/25/2017</span></div>
        <div className="relative ml-[27px] h-[36px] w-[36px]">
          <svg width="24" height="24" viewBox="0 0 24 24"><path d="M0 0H24V19H12L7 24V19H0Z" fill="#fff" /><path d="M5 5.500H19M5 9.500H19M5 13.500H15" stroke="#0a2c50" strokeWidth="1.400" /></svg>
          <span className="absolute top-[11px] left-[11px] flex h-[25px] w-[25px] items-center justify-center rounded-full border border-[#7fa5cf] bg-[#073f81] text-[15px] font-semibold">1</span>
        </div>
        <div className="mr-[6px] ml-[18px] h-[60px] w-[2px] bg-[#5d7b92]" />
      </div>
    </footer>
  );
}

export default function App() {
  return (
    <div className="flex h-[1080px] w-[1920px] flex-col overflow-hidden bg-white font-['Open_Sans',sans-serif]">
      <TitleBar />
      <Toolbar />
      <main className="flex h-[921px] overflow-hidden font-['DejaVu_Sans',sans-serif] text-black">
        <div className="flex-1">
          <div className="flex h-[251px] items-start pl-[72px]">
            <div className="w-[264px] pt-[25px]">
              <p className="text-[15px] leading-[24px] tracking-[0.050px]">Administration Boundary :</p>
              <div className="pl-[12px]"><Choice round label="Kotamadya" /><Choice round on label="Kecamatan" /><Choice round label="Kelurahan" /></div>
            </div>
            <div className="w-[275px] pt-[58px]">
              <p className="text-[15px] leading-[24px] tracking-[0.200px]">Health Institutions :</p>
              <div className="pl-[11px]"><Choice label="Rumah Sakit" /><Choice label="Puskesmas" /></div>
            </div>
            <div className="pt-[92px]">
              <p className="text-[15px] leading-[24px] tracking-[0.200px]">Drivers :</p>
              <div className="pl-[10px]"><Choice on label="Tidak Sehat" /></div>
            </div>
          </div>
          <div className="flex pl-[90px]">
            <DistrictMap />
            <div>
              <div className="flex h-[539px] items-start"><Readings /><Person /></div>
              <Legend />
            </div>
          </div>
        </div>
        <ScrollBar />
      </main>
      <TaskBar />
    </div>
  );
}
